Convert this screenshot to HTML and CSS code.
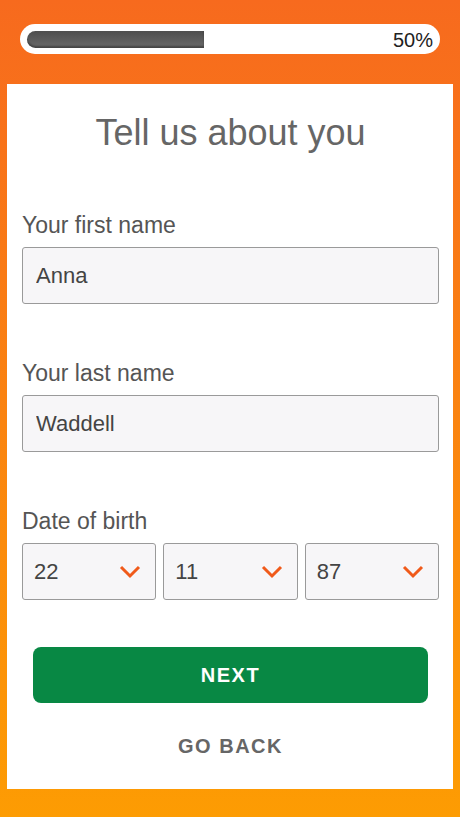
FILE: index.html
```html
<!DOCTYPE html>
<html lang="en">
<head>
    <meta charset="UTF-8">
    <meta name="viewport" content="width=device-width, initial-scale=1.0">
    <title>Tell us about you</title>
    <link rel="stylesheet" href="styles.css">
</head>
<body>
    <div class="top">
        <div class="progress">
            <div class="progress-bar"></div>
            <span class="progress-text">50%</span>
        </div>
    </div>

    <div class="card">
        <h1>Tell us about you</h1>

        <div class="form-group">
            <label for="firstname">Your first name</label>
            <input type="text" id="firstname" value="Anna">
        </div>
        <div class="form-group">
            <label for="lastname">Your last name</label>
            <input type="text" id="lastname" value="Waddell">
        </div>
        <div class="form-group">
            <label>Date of birth</label>
            <div class="dob">
                <div class="select">
                    <span>22</span>
                    <svg width="22" height="14" viewBox="0 0 22 14"><path d="M2 2 L11 11 L20 2" fill="none" stroke="#f05a1a" stroke-width="3"/></svg>
                </div>
                <div class="select">
                    <span>11</span>
                    <svg width="22" height="14" viewBox="0 0 22 14"><path d="M2 2 L11 11 L20 2" fill="none" stroke="#f05a1a" stroke-width="3"/></svg>
                </div>
                <div class="select">
                    <span>87</span>
                    <svg width="22" height="14" viewBox="0 0 22 14"><path d="M2 2 L11 11 L20 2" fill="none" stroke="#f05a1a" stroke-width="3"/></svg>
                </div>
            </div>
        </div>

        <button type="button" class="button">NEXT</button>
        <a href="#" class="back">GO BACK</a>
    </div>
</body>
</html>
```

FILE: styles.css
```css
body {
    margin: 0;
    height: 817px;
    background: linear-gradient(to bottom, #f76a1e, #fd9c03);
    font-family: "Liberation Sans", Arial, sans-serif;
}
.top {
    padding: 24px 20px 30px;
}
.progress {
    height: 30px;
    background: #ffffff;
    border-radius: 15px;
    display: flex;
    align-items: center;
    justify-content: space-between;
    padding: 0 7px;
}
.progress-bar {
    width: 177px;
    height: 17px;
    border-radius: 9px 0 0 9px;
    background: linear-gradient(to bottom, #4e4e4e, #6a6a6a);
    box-shadow: inset 0 -2px 2px rgba(0, 0, 0, 0.35);
}
.progress-text {
    font-size: 20px;
    color: #222222;
    line-height: 22px;
    padding-top: 1px;
}
.card {
    margin: 0 7px;
    height: 705px;
    box-sizing: border-box;
    background: #ffffff;
    padding: 29px 14px 0 15px;
    display: flex;
    flex-direction: column;
}
h1 {
    margin: 0 0 59px;
    font-size: 36px;
    line-height: 40px;
    font-weight: 300;
    color: #666666;
    text-align: center;
}
.form-group {
    margin-bottom: 56px;
}
.form-group:last-of-type {
    margin-bottom: 47px;
}
label {
    display: block;
    font-size: 23px;
    line-height: 26px;
    color: #555555;
    margin-bottom: 9px;
}
input {
    display: block;
    width: 100%;
    height: 57px;
    box-sizing: border-box;
    padding: 0 13px;
    border: 1px solid #9a9a9a;
    border-radius: 3px;
    background: #f7f6f8;
    font-family: "Liberation Sans", Arial, sans-serif;
    font-size: 22px;
    color: #444444;
    outline: none;
}
.dob {
    display: grid;
    grid-template-columns: repeat(3, 1fr);
    gap: 7px;
}
.select {
    height: 57px;
    box-sizing: border-box;
    border: 1px solid #9a9a9a;
    border-radius: 3px;
    background: #f7f6f8;
    display: flex;
    align-items: center;
    justify-content: space-between;
    padding: 0 14px 0 11px;
    font-size: 22px;
    color: #444444;
}
.select svg {
    display: block;
    margin-top: 1px;
}
.button {
    margin: 0 11px;
    height: 56px;
    border: none;
    border-radius: 8px;
    background: #088844;
    color: #ffffff;
    font-family: "Liberation Sans", Arial, sans-serif;
    font-size: 20px;
    font-weight: bold;
    letter-spacing: 1.5px;
    cursor: pointer;
}
.back {
    margin-top: 31px;
    text-align: center;
    font-size: 20px;
    line-height: 24px;
    font-weight: bold;
    letter-spacing: 1.5px;
    color: #666666;
    text-decoration: none;
}
```
